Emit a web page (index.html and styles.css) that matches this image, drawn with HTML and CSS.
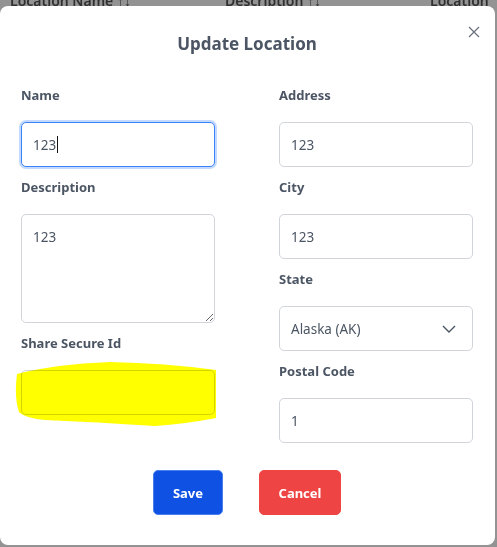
FILE: index.html
```html
<!DOCTYPE html>
<html lang="en">
<head>
    <meta charset="UTF-8">
    <title>Update Location</title>
    <link rel="stylesheet" href="styles.css">
</head>
<body>
    <div class="table-head">
        <span class="th th-name">Location Name ↑↓</span>
        <span class="th th-desc">Description ↑↓</span>
        <span class="th th-loc">Location</span>
    </div>

    <div class="overlay">
        <div class="modal">
            <button class="close" aria-label="Close">
                <svg width="12" height="12" viewBox="0 0 12 12">
                    <path d="M1 1L11 11M11 1L1 11" stroke="#6b7280" stroke-width="1.3" fill="none"/>
                </svg>
            </button>

            <h2 class="title">Update Location</h2>

            <form class="form">
                <div class="col">
                    <div class="field">
                        <label>Name</label>
                        <div class="control focused">123<span class="caret"></span></div>
                    </div>
                    <div class="field">
                        <label for="desc">Description</label>
                        <textarea id="desc" class="control area">123</textarea>
                    </div>
                    <div class="field">
                        <label for="secure">Share Secure Id</label>
                        <div class="hidden-wrap">
                            <input id="secure" class="control" value="">
                            <!-- scribbled out -->
                            <svg class="scribble" width="202" height="64" viewBox="0 0 202 64">
                                <path d="M2 12 Q40 2 95 0 Q150 1 201 8 L201 56 Q170 62 140 64 Q80 60 30 58 Q10 56 4 50 Q-1 35 2 12 Z" fill="#ffff00"/>
                            </svg>
                        </div>
                    </div>
                </div>

                <div class="col">
                    <div class="field">
                        <label for="address">Address</label>
                        <input id="address" class="control" value="123">
                    </div>
                    <div class="field">
                        <label for="city">City</label>
                        <input id="city" class="control" value="123">
                    </div>
                    <div class="field">
                        <label>State</label>
                        <div class="control select">
                            <span>Alaska (AK)</span>
                            <svg width="14" height="8" viewBox="0 0 14 8">
                                <path d="M1 1L7 7L13 1" stroke="#4b5563" stroke-width="1.4" fill="none"/>
                            </svg>
                        </div>
                    </div>
                    <div class="field">
                        <label for="postal">Postal Code</label>
                        <input id="postal" class="control" value="1">
                    </div>
                </div>
            </form>

            <div class="actions">
                <button class="btn save">Save</button>
                <button class="btn cancel">Cancel</button>
            </div>
        </div>
    </div>
</body>
</html>
```

FILE: styles.css
```css
*{
    box-sizing: border-box;
}

body{
    margin: 0;
    width: 497px;
    height: 547px;
    overflow: hidden;
    background: #939393;
    font-family: "Noto Sans", "Open Sans", sans-serif;
    position: relative;
}

.table-head{
    display: flex;
    margin-top: -9px;
    height: 15px;
    font-size: 14px;
    font-weight: 600;
    color: #2f2f2f;
    white-space: nowrap;
}
.th-name{margin-left: 10px; width: 215px;}
.th-desc{width: 205px;}

.overlay{
    position: absolute;
    inset: 0;
    padding: 6px 2px 2px 0;
}

.modal{
    position: relative;
    height: 539px;
    background: #fff;
    border-radius: 8px;
    padding: 24px 22px 30px 21px;
    color: #4b5563;
}

.close{
    position: absolute;
    top: 20px;
    right: 15px;
    padding: 0;
    border: 0;
    background: none;
    line-height: 0;
}

.title{
    margin: 0;
    text-align: center;
    font-size: 17px;
    line-height: 28px;
    font-weight: 700;
}

.form{
    display: grid;
    grid-template-columns: 194px 194px;
    column-gap: 64px;
    margin-top: 27px;
}

.field{
    display: flex;
    flex-direction: column;
    margin-bottom: 10px;
}

.field label{
    font-size: 13px;
    font-weight: 700;
    line-height: 20px;
    margin-bottom: 17px;
}

.control{
    height: 45px;
    width: 194px;
    border: 1px solid #d1d5db;
    border-radius: 5px;
    padding: 0 11px;
    font-family: inherit;
    font-size: 13.5px;
    color: #4b5563;
    background: #fff;
    display: flex;
    align-items: center;
}

.focused{
    border-color: #3b82f6;
    box-shadow: 0 0 0 2px #c3dafe;
}

.caret{
    display: inline-block;
    width: 1px;
    height: 17px;
    margin-left: 1px;
    background: #111;
}

.area{
    height: 109px;
    padding: 12px 11px;
    resize: vertical;
    line-height: 20px;
}

.hidden-wrap{
    position: relative;
}
.scribble{
    position: absolute;
    left: -6px;
    top: -8px;
    mix-blend-mode: multiply;
}

.select{
    justify-content: space-between;
    padding-right: 16px;
}

.actions{
    display: flex;
    justify-content: center;
    gap: 36px;
    margin-top: 17px;
}

.btn{
    height: 45px;
    border-radius: 5px;
    font-family: inherit;
    font-size: 13px;
    font-weight: 700;
    color: #fff;
}
.save{
    width: 70px;
    background: #0f52e3;
    border: 1px solid #4b7ff0;
}
.cancel{
    width: 82px;
    background: #ef4444;
    border: 1px solid #ef4444;
}
```
